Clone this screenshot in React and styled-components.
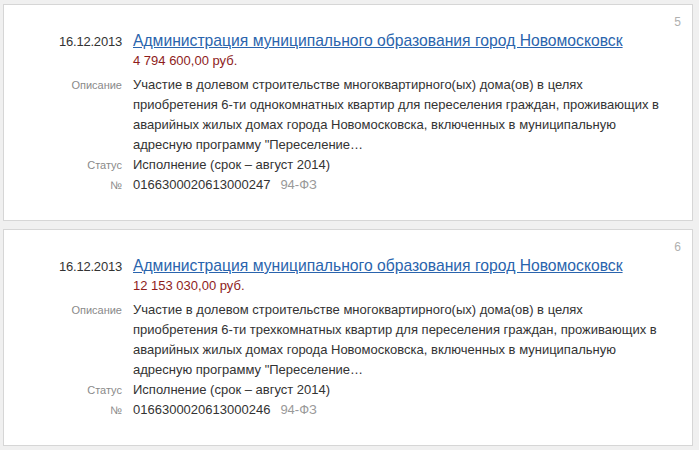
import React from "react";
import styled, { createGlobalStyle } from "styled-components";

const Global = createGlobalStyle`
  html, body {
    margin: 0;
    background: #f0f0f0;
    font-family: "Liberation Sans", Arial, sans-serif;
  }
`;

const items = [
  {
    index: 5,
    date: "16.12.2013",
    title: "Администрация муниципального образования город Новомосковск",
    amount: "4 794 600,00 руб.",
    lines: [
      "Участие в долевом строительстве многоквартирного(ых) дома(ов) в целях",
      "приобретения 6-ти однокомнатных квартир для переселения граждан, проживающих в",
      "аварийных жилых домах города Новомосковска, включенных в муниципальную",
      "адресную программу \"Переселение…",
    ],
    status: "Исполнение (срок – август 2014)",
    number: "0166300020613000247",
    law: "94-ФЗ",
  },
  {
    index: 6,
    date: "16.12.2013",
    title: "Администрация муниципального образования город Новомосковск",
    amount: "12 153 030,00 руб.",
    lines: [
      "Участие в долевом строительстве многоквартирного(ых) дома(ов) в целях",
      "приобретения 6-ти трехкомнатных квартир для переселения граждан, проживающих в",
      "аварийных жилых домах города Новомосковска, включенных в муниципальную",
      "адресную программу \"Переселение…",
    ],
    status: "Исполнение (срок – август 2014)",
    number: "0166300020613000246",
    law: "94-ФЗ",
  },
];

const App = () => {
  return (
    <Page>
      <Global />
      {items.map((item) => (
        <Card key={item.index}>
          <Index>{item.index}</Index>
          <Grid>
            <DateCell>{item.date}</DateCell>
            <div>
              <Title href="#">{item.title}</Title>
              <Amount>{item.amount}</Amount>
            </div>
            <Label $top>Описание</Label>
            <Value $top>
              {item.lines.map((l, i) => (
                <div key={i}>{l}</div>
              ))}
            </Value>
            <Label>Статус</Label>
            <Value>{item.status}</Value>
            <Label>№</Label>
            <Value>
              {item.number}
              <Law>{item.law}</Law>
            </Value>
          </Grid>
        </Card>
      ))}
    </Page>
  );
};

export default App;

const Page = styled.div`
  display: flex;
  flex-direction: column;
  gap: 8px;
  padding: 4px 6px 0 3px;
`;
const Card = styled.div`
  position: relative;
  background: #fff;
  border: 1px solid #d6d6d6;
  padding: 26px 0 25px 0;
`;
const Index = styled.div`
  position: absolute;
  top: 10px;
  right: 11px;
  font-size: 12px;
  color: #b0b0b0;
`;
const Grid = styled.div`
  display: grid;
  grid-template-columns: 118px 1fr;
  column-gap: 11px;
  color: #333;
  font-size: 13px;
  line-height: 20px;
`;
const DateCell = styled.div`
  text-align: right;
  font-size: 13px;
  line-height: 20px;
  letter-spacing: -0.2px;
  padding-top: 1px;
`;
const Title = styled.a`
  display: block;
  font-size: 15.7px;
  line-height: 20px;
  color: #2a64ad;
  text-decoration: underline;
`;
const Amount = styled.div`
  color: #8e1c1c;
  font-size: 13px;
  line-height: 18px;
  padding-top: 1px;
`;
const Label = styled.div`
  text-align: right;
  font-size: 11px;
  color: #8a8a8a;
  margin-top: ${(p) => (p.$top ? "5px" : "0")};
`;
const Value = styled.div`
  margin-top: ${(p) => (p.$top ? "5px" : "0")};
`;
const Law = styled.span`
  color: #999;
  margin-left: 10px;
`;
